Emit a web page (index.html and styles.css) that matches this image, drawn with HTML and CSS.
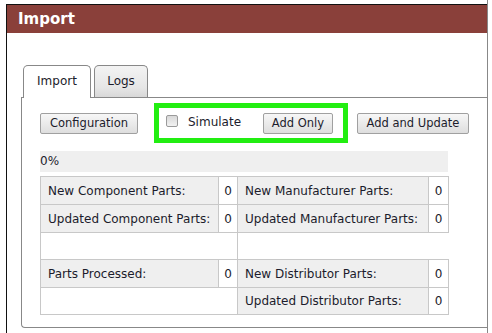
FILE: index.html
```html
<!DOCTYPE html>
<html lang="en">
<head>
    <meta charset="UTF-8">
    <title>Import</title>
    <link rel="stylesheet" href="styles.css">
</head>
<body>
<div class="page">
    <div class="dialog">
        <div class="dialog-title">Import</div>
        <div class="dialog-body">
            <!-- tabs -->
            <div class="tabs">
                <div class="tab tab-active">Import</div>
                <div class="tab">Logs</div>
            </div>
            <div class="panel">
                <div class="toolbar">
                    <button class="btn btn-config">Configuration</button>
                    <div class="highlight">
                        <label class="sim"><input type="checkbox" class="check"> Simulate</label>
                        <button class="btn btn-add">Add Only</button>
                    </div>
                    <button class="btn btn-update">Add and Update</button>
                </div>
                <div class="progress">0%</div>
                <table class="stats">
                    <colgroup>
                        <col style="width:178px">
                        <col style="width:19px">
                        <col style="width:191px">
                        <col style="width:20px">
                    </colgroup>
                    <tr>
                        <td class="label">New Component Parts:</td><td class="value">0</td>
                        <td class="label">New Manufacturer Parts:</td><td class="value">0</td>
                    </tr>
                    <tr>
                        <td class="label">Updated Component Parts:</td><td class="value">0</td>
                        <td class="label">Updated Manufacturer Parts:</td><td class="value">0</td>
                    </tr>
                    <tr class="short">
                        <td colspan="2"></td>
                        <td colspan="2" class="open"></td>
                    </tr>
                    <tr>
                        <td class="label">Parts Processed:</td><td class="value">0</td>
                        <td class="label">New Distributor Parts:</td><td class="value">0</td>
                    </tr>
                    <tr class="short">
                        <td colspan="2"></td>
                        <td class="label">Updated Distributor Parts:</td><td class="value">0</td>
                    </tr>
                </table>
            </div>
        </div>
    </div>
</div>
</body>
</html>
```

FILE: styles.css
```css
/* page and dialog frame */
body {
    margin: 0;
    font-family: "DejaVu Sans", sans-serif;
    font-size: 12px;
    color: #1c1c2c;
    background: #fff;
}
.page {
    width: 488px;
    height: 333px;
    box-sizing: border-box;
    padding-top: 4px;
    border-right: 1px solid #888;
    overflow: hidden;
}
.dialog {
    margin-left: 6px;
    border-top: 1px solid #111;
    border-left: 1px solid #111;
    height: 340px;
}
.dialog-title {
    height: 28px;
    line-height: 28px;
    padding-left: 11px;
    background: #8a403a;
    color: #fff;
    font-weight: bold;
    font-size: 15px;
}
.dialog-body {
    padding: 32px 0 0 14px;
}

/* tabs */
.tabs {
    display: flex;
    align-items: flex-end;
    gap: 3px;
    padding-left: 2px;
}
.tab {
    box-sizing: border-box;
    height: 32px;
    line-height: 30px;
    text-align: center;
    border: 1px solid #888;
    border-bottom: none;
    border-radius: 5px 5px 0 0;
    background: linear-gradient(#f3f3f3, #e6e6e6 70%, #d8d8d8);
    width: 54px;
}
.tab-active {
    width: 68px;
    height: 33px;
    margin-bottom: -1px;
    background: #fff;
    position: relative;
}

/* panel */
.panel {
    border-top: 1px solid #888;
    border-left: 1px solid #888;
    border-bottom: 1px solid #888;
    border-bottom-left-radius: 4px;
    padding: 5px 0 12px 18px;
}
.toolbar {
    display: flex;
    align-items: center;
}
.btn {
    box-sizing: border-box;
    height: 21px;
    padding: 0;
    font-family: "DejaVu Sans", sans-serif;
    font-size: 11.5px;
    color: #1c1c2c;
    border: 1px solid #a0a0a0;
    border-radius: 2px;
    background: linear-gradient(#f7f7f7, #dedede);
}
.btn-config { width: 98px; margin-right: 16px; }
.btn-add { width: 70px; margin-left: auto; }
.btn-update { width: 112px; margin-left: 9px; }

.highlight {
    box-sizing: border-box;
    width: 194px;
    height: 40px;
    border: 5px solid #22ee11;
    padding: 0 10px 0 7px;
    display: flex;
    align-items: center;
}
.sim {
    display: flex;
    align-items: center;
    gap: 10px;
    margin-bottom: 2px;
}
.check {
    appearance: none;
    margin: 0 0 2px 0;
    width: 12px;
    height: 12px;
    border: 1px solid #9a9a9a;
    border-radius: 2px;
    background: linear-gradient(#d8d8d8, #f2f2f2);
}

/* progress */
.progress {
    width: 408px;
    height: 21px;
    line-height: 21px;
    margin-top: 8px;
    background: #efefef;
}

/* stats table */
.stats {
    margin-top: 4px;
    width: 408px;
    border-collapse: collapse;
    table-layout: fixed;
}
.stats tr { height: 28px; }
.stats tr.short { height: 27px; }
.stats td {
    border: 1px solid #c8c8c8;
    padding: 0 7px;
    background: #fff;
    white-space: nowrap;
}
.stats td.label { background: #efefef; }
.stats td.value { text-align: center; padding: 0; }
.stats td.open { border-right: none; }
```
